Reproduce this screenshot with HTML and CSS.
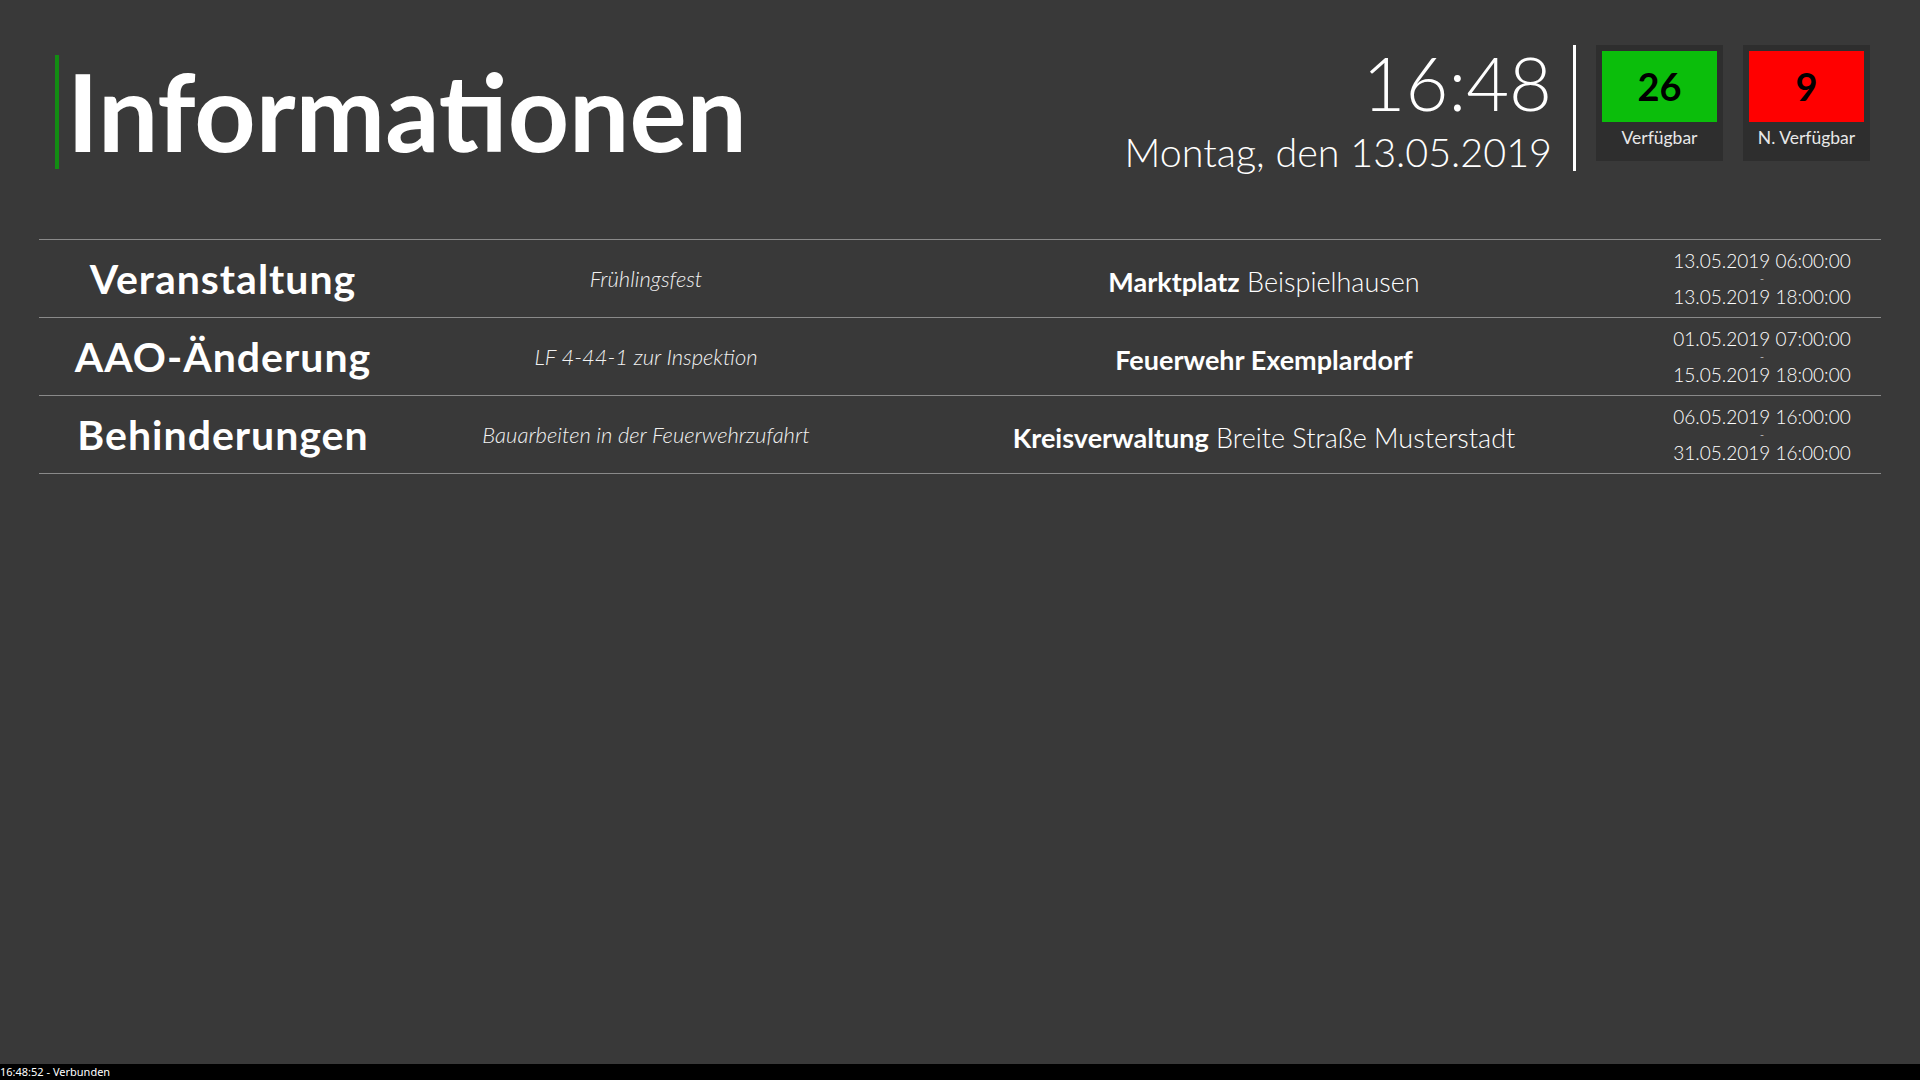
FILE: index.html
```html
<!DOCTYPE html>
<html lang="de">
<head>
    <meta charset="UTF-8">
    <meta name="viewport" content="width=device-width, initial-scale=1.0">
    <title>Informationen</title>
    <link rel="stylesheet" href="styles.css">
</head>
<body>
    <div class="page">
        <!-- Kopfzeile -->
        <div class="header">
            <h1 class="title">Informationen</h1>
            <div class="header-right">
                <div class="clock">
                    <div class="time">16:48</div>
                    <div class="date">Montag, den 13.05.2019</div>
                </div>
                <div class="status">
                    <div class="badge">
                        <div class="count green">26</div>
                        <div class="label">Verfügbar</div>
                    </div>
                    <div class="badge">
                        <div class="count red">9</div>
                        <div class="label">N. Verfügbar</div>
                    </div>
                </div>
            </div>
        </div>

        <!-- Informationen -->
        <table class="info-table">
            <tr>
                <td class="category">Veranstaltung</td>
                <td class="description">Frühlingsfest</td>
                <td class="location"><strong>Marktplatz</strong> Beispielhausen</td>
                <td class="period">
                    <div>13.05.2019 06:00:00</div>
                    <div class="dash">-</div>
                    <div>13.05.2019 18:00:00</div>
                </td>
            </tr>
            <tr>
                <td class="category">AAO-Änderung</td>
                <td class="description">LF 4-44-1 zur Inspektion</td>
                <td class="location"><strong>Feuerwehr Exemplardorf</strong></td>
                <td class="period">
                    <div>01.05.2019 07:00:00</div>
                    <div class="dash">-</div>
                    <div>15.05.2019 18:00:00</div>
                </td>
            </tr>
            <tr>
                <td class="category">Behinderungen</td>
                <td class="description">Bauarbeiten in der Feuerwehrzufahrt</td>
                <td class="location"><strong>Kreisverwaltung</strong> Breite Straße Musterstadt</td>
                <td class="period">
                    <div>06.05.2019 16:00:00</div>
                    <div class="dash">-</div>
                    <div>31.05.2019 16:00:00</div>
                </td>
            </tr>
        </table>
    </div>

    <div class="statusbar">16:48:52 - Verbunden</div>
</body>
</html>
```

FILE: styles.css
```css
/* Infomonitor - dunkles Theme */
html, body {
    height: 100%;
}
body {
    margin: 0;
    background-color: #393939;
    color: #ffffff;
    font-family: Lato, "Open Sans", sans-serif;
    overflow: hidden;
}
.page {
    padding: 45px 39px 0 39px;
}
.header {
    display: flex;
    justify-content: space-between;
    align-items: flex-start;
    height: 194px;
}
.title {
    margin: 10px 0 0 16px;
    padding-left: 8px;
    border-left: 4px solid #128c12;
    height: 114px;
    line-height: 112px;
    font-size: 107px;
    font-weight: 700;
}
.header-right {
    display: flex;
    margin-right: 11px;
}
.clock {
    text-align: right;
    padding-right: 21px;
    border-right: 3px solid #ffffff;
    height: 126px;
    font-weight: 300;
}
.time {
    font-size: 74px;
    line-height: 76px;
}
.date {
    font-size: 39.5px;
    line-height: 62px;
}
.status {
    display: flex;
    gap: 20px;
    margin-left: 20px;
}
.badge {
    width: 115px;
    height: 104px;
    padding: 6px;
    background-color: #2e2e2e;
    text-align: center;
}
.count {
    height: 71px;
    line-height: 71px;
    font-size: 38px;
    font-weight: 700;
    color: #000000;
}
.green {
    background-color: #0bbe0b;
}
.red {
    background-color: #ff0000;
}
.label {
    font-size: 17.5px;
    line-height: 32px;
    color: #e8e8e8;
}
.info-table {
    width: 100%;
    border-collapse: collapse;
    border-top: 1px solid #8a8a8a;
}
.info-table td {
    height: 77px;
    padding: 0;
    border-bottom: 1px solid #8a8a8a;
    text-align: center;
    vertical-align: middle;
}
.category {
    width: 368px;
    font-size: 41px;
    font-weight: 700;
    letter-spacing: 1px;
}
.description {
    width: 478px;
    font-size: 22px;
    font-style: italic;
    font-weight: 300;
    color: #f2f2f2;
}
.info-table .location {
    width: 758px;
    height: 71px;
    padding-top: 6px;
    font-size: 27px;
    font-weight: 300;
}
.location strong {
    font-weight: 700;
}
.period {
    font-size: 19px;
    line-height: 18px;
    font-weight: 300;
}
.dash {
    font-size: 12px;
    line-height: 18px;
}
.statusbar {
    position: fixed;
    left: 0;
    right: 0;
    bottom: 0;
    height: 16px;
    line-height: 16px;
    background-color: #000000;
    font-family: "Noto Sans", "Open Sans", sans-serif;
    font-size: 11px;
}
```
